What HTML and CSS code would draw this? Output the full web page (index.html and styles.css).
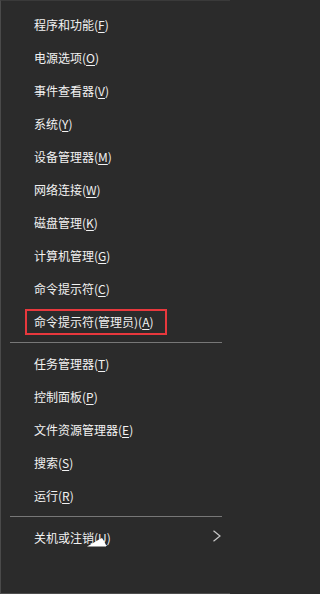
FILE: index.html
```html
<!DOCTYPE html>
<html lang="zh-CN">
<head>
<meta charset="utf-8">
<title>快速链接菜单</title>
<link rel="stylesheet" href="styles.css">
</head>
<body>
<div class="menu">
  <ul class="group">
    <li class="item">程序和功能(<u>F</u>)</li>
    <li class="item">电源选项(<u>O</u>)</li>
    <li class="item">事件查看器(<u>V</u>)</li>
    <li class="item">系统(<u>Y</u>)</li>
    <li class="item">设备管理器(<u>M</u>)</li>
    <li class="item">网络连接(<u>W</u>)</li>
    <li class="item">磁盘管理(<u>K</u>)</li>
    <li class="item">计算机管理(<u>G</u>)</li>
    <li class="item">命令提示符(<u>C</u>)</li>
    <li class="item item-marked"><span class="mark">命令提示符(管理员)(<u>A</u>)</span></li>
  </ul>
  <div class="sep"></div>
  <ul class="group">
    <li class="item">任务管理器(<u>T</u>)</li>
    <li class="item">控制面板(<u>P</u>)</li>
    <li class="item">文件资源管理器(<u>E</u>)</li>
    <li class="item">搜索(<u>S</u>)</li>
    <li class="item">运行(<u>R</u>)</li>
  </ul>
  <div class="sep"></div>
  <ul class="group">
    <li class="item item-sub">
      <span>关机或注销(<u>U</u>)</span>
      <svg class="chev" width="10" height="12" viewBox="0 0 10 12"><path d="M1.5 0.8 L8 6 L1.5 11.2" fill="none" stroke="#c8c8c8" stroke-width="1.2"/></svg>
    </li>
  </ul>
  <svg class="cursor" width="20" height="10" viewBox="0 0 20 10"><path d="M0 8.5 C4 6 8 4 13 1 L15 0 L17 3 L19 7 L19 8.5 Z" fill="#ffffff"/></svg>
</div>
</body>
</html>
```

FILE: styles.css
```css
html, body {
  margin: 0;
  padding: 0;
  background: #2b2b2b;
}
.menu {
  position: relative;
  box-sizing: border-box;
  width: 230px;
  height: 594px;
  background: #2b2b2b;
  border-left: 1px solid #4a4a4a;
  border-top: 1px solid #3a3a3a;
  border-bottom: 1px solid #4e4e4e;
  padding-top: 7px;
  font-family: "Noto Sans CJK SC", "Noto Sans", sans-serif;
  font-size: 12px;
  color: #f2f2f2;
}
.group {
  list-style: none;
  margin: 0;
  padding: 0;
}
.item {
  height: 33px;
  display: flex;
  align-items: center;
  padding-left: 33px;
  white-space: nowrap;
}
.item u {
  text-decoration: underline;
  text-underline-offset: 2px;
}
.item-marked {
  padding-left: 24px;
}
.mark {
  box-sizing: border-box;
  height: 26px;
  display: flex;
  align-items: center;
  border: 2px solid #e8383d;
  padding: 0 11px 0 7px;
}
.item-sub {
  justify-content: space-between;
  padding-right: 8px;
}
.chev {
  display: block;
  margin-top: -4px;
}
.sep {
  height: 1px;
  background: #777777;
  margin: 4px 8px 4px 9px;
}
.cursor {
  position: absolute;
  left: 86px;
  top: 537px;
}
```
